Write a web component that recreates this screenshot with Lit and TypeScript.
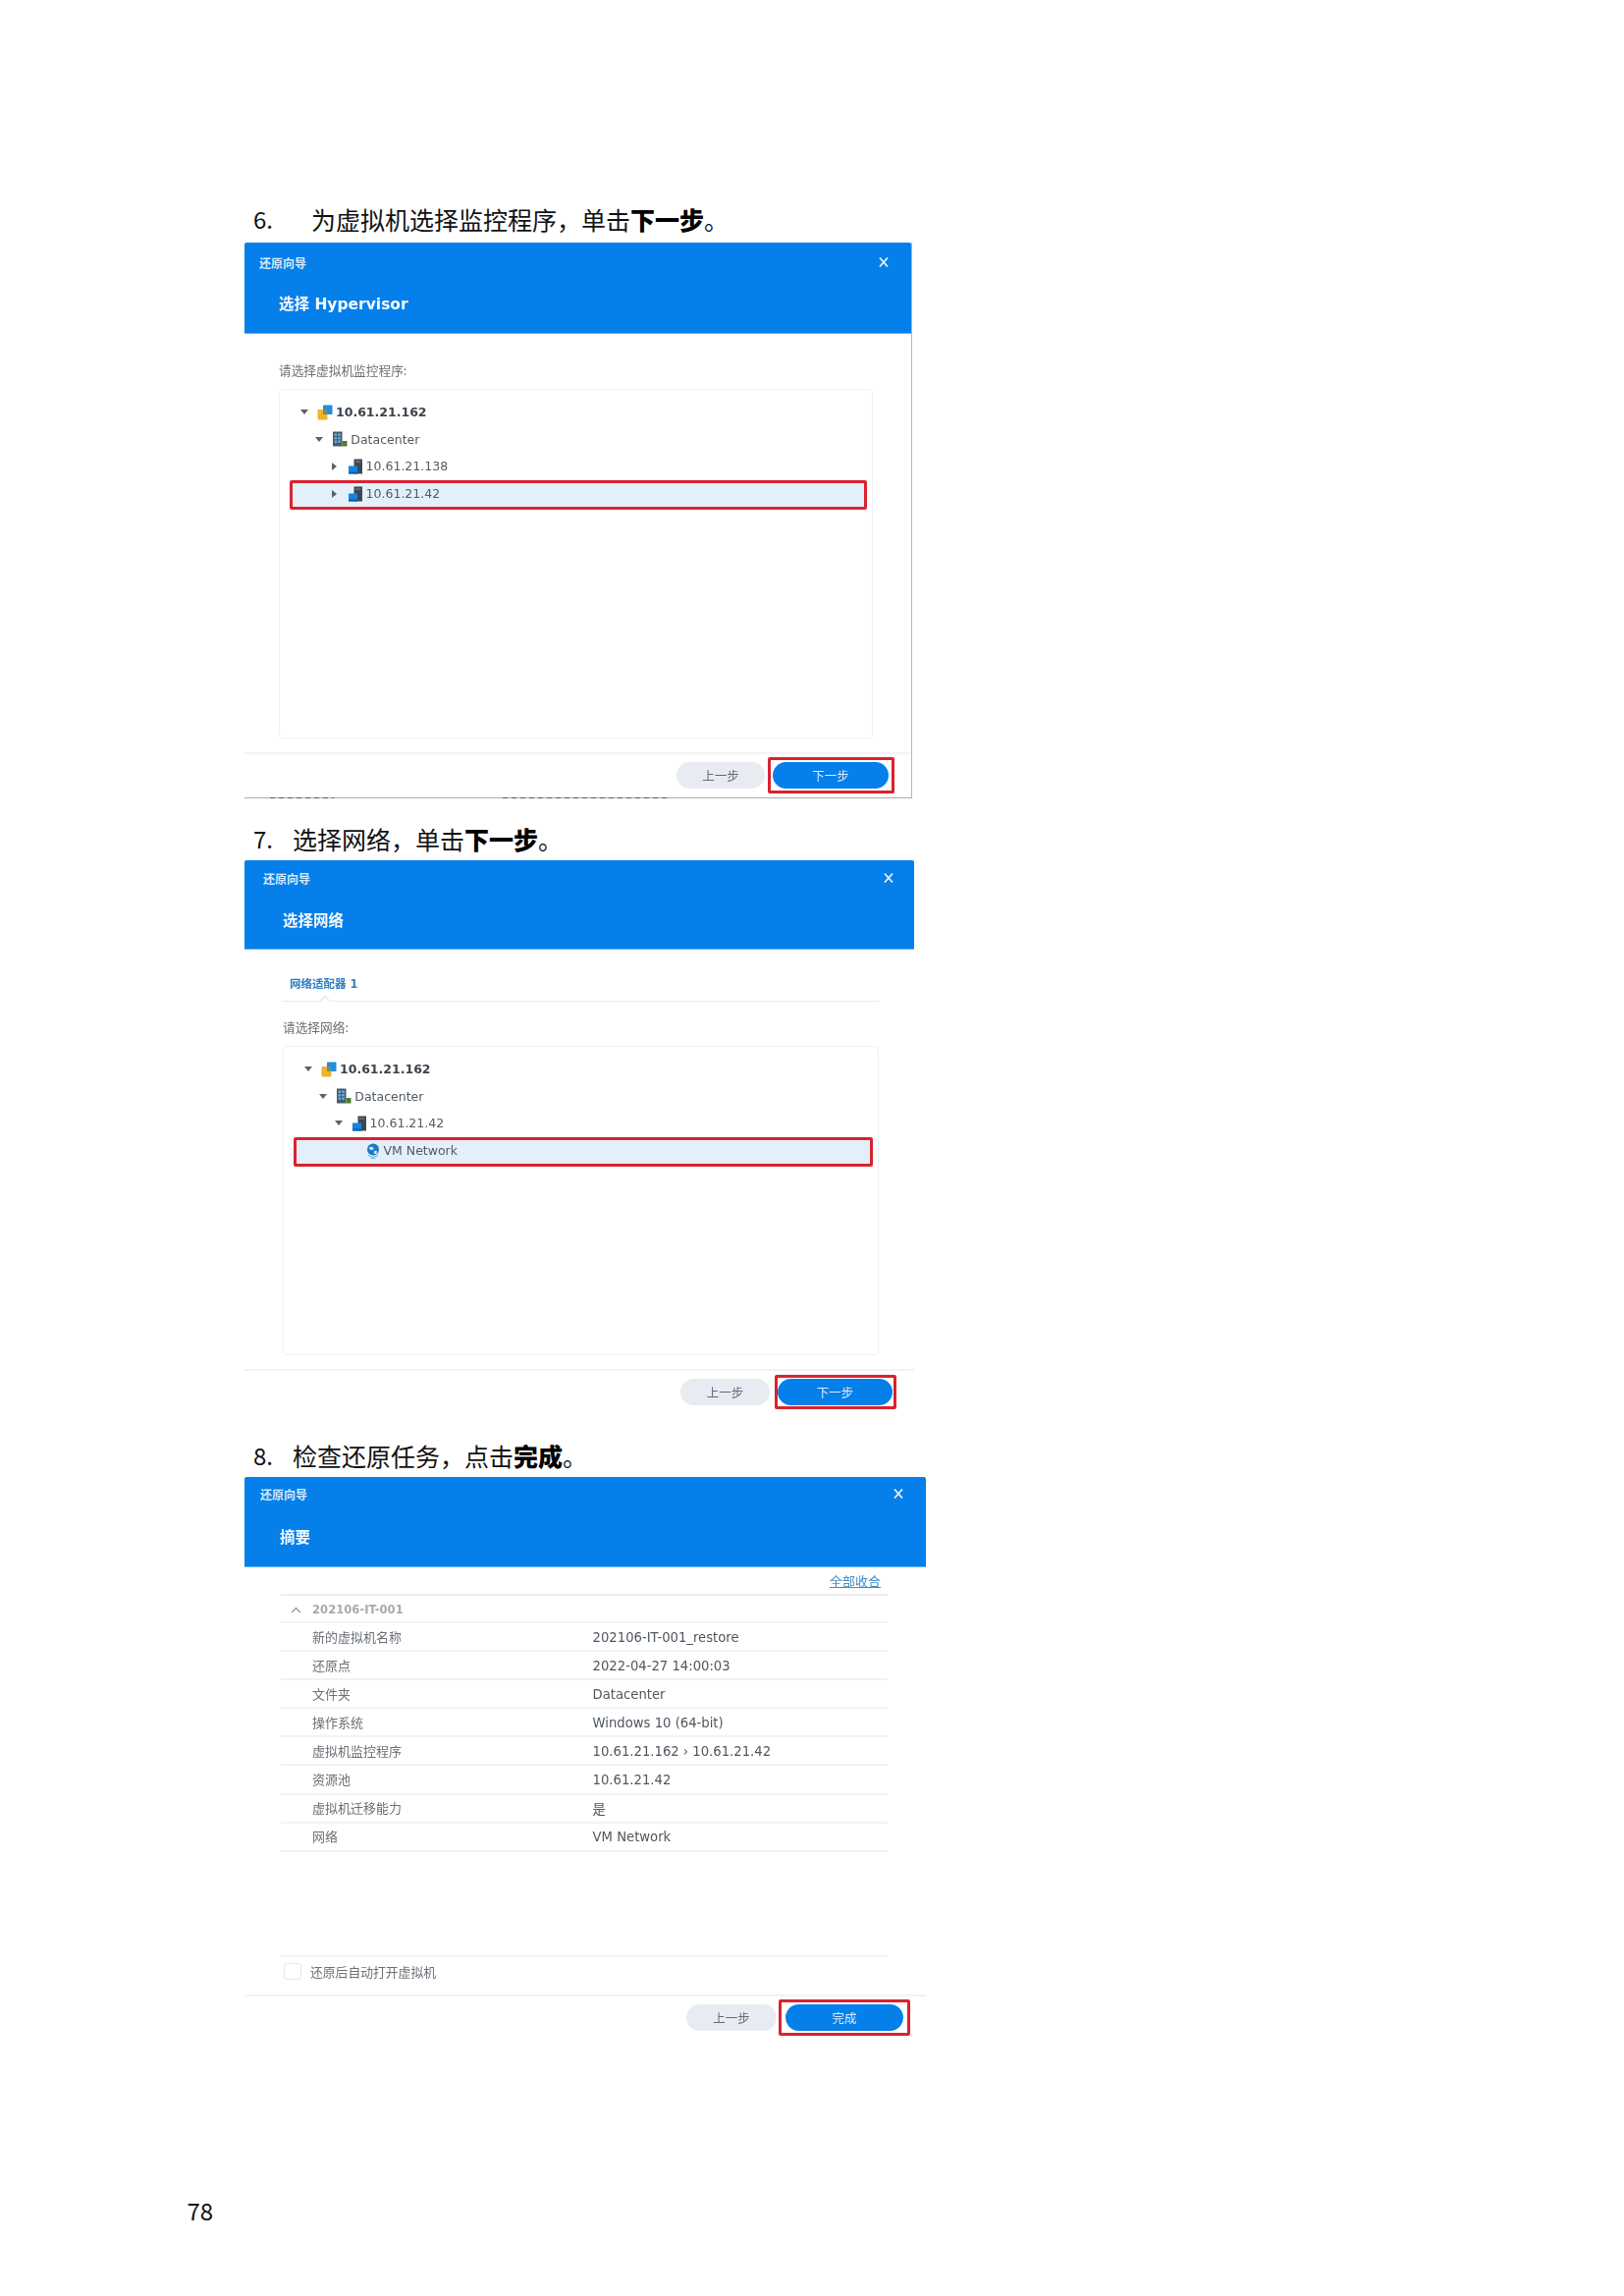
import { LitElement, html, css, svg } from "lit";
import { customElement } from "lit/decorators.js";

const icons = {
  vc: svg`<svg viewBox="0 0 16 16" width="16" height="16"><rect x="0.5" y="5" width="10" height="10.5" rx="1" fill="#f1b32b"/><rect x="6" y="0.5" width="9.5" height="9.5" rx="0.6" fill="#1f8edb"/><rect x="6" y="5" width="4.5" height="5" fill="#6d8f7f"/></svg>`,
  dc: svg`<svg viewBox="0 0 16 16" width="16" height="16"><rect x="1" y="0.5" width="9.5" height="15" fill="#4a5a6a"/><rect x="2.5" y="2.5" width="2.6" height="2.4" fill="#5fb0ea"/><rect x="6.2" y="2.5" width="2.6" height="2.4" fill="#5fb0ea"/><rect x="2.5" y="6" width="2.6" height="2.4" fill="#5fb0ea"/><rect x="6.2" y="6" width="2.6" height="2.4" fill="#5fb0ea"/><rect x="2.5" y="9.5" width="2.6" height="2.4" fill="#5fb0ea"/><rect x="6.2" y="9.5" width="2.6" height="2.4" fill="#5fb0ea"/><rect x="10.5" y="10" width="5" height="5.5" fill="#4f7a32"/></svg>`,
  host: svg`<svg viewBox="0 0 16 16" width="16" height="16"><rect x="6.5" y="0.5" width="8.5" height="15" fill="#3d4753"/><rect x="8" y="2.5" width="5.5" height="1.2" fill="#76818c"/><rect x="1" y="7.5" width="9" height="8" fill="#1583e0"/><rect x="1" y="13.5" width="9" height="2" fill="#0d5fa8"/></svg>`,
  net: svg`<svg viewBox="0 0 16 16" width="16" height="16"><circle cx="8" cy="6.5" r="6" fill="#1a78c4"/><path d="M4 4.5c2-1.5 3.5-.5 4.5.5s-1 2.5-2.5 2S3.5 5.5 4 4.5zM9.5 8c1.5-.5 2.8 0 2.5 1.5S9.5 11.5 9 10.5 8.5 8.5 9.5 8z" fill="#cfe6f7"/><path d="M3 12.5c2.8 1.8 7.2 1.8 10 0M8 13.5v2M5.5 15.5h5" stroke="#6fb0dd" stroke-width="1.2" fill="none"/></svg>`,
};

interface Node { label: string; icon: keyof typeof icons; level: number; arrow: "down" | "right" | "none"; strong?: boolean; sel?: boolean; }

const tree1: Node[] = [
  { label: "10.61.21.162", icon: "vc", level: 0, arrow: "down", strong: true },
  { label: "Datacenter", icon: "dc", level: 1, arrow: "down" },
  { label: "10.61.21.138", icon: "host", level: 2, arrow: "right" },
  { label: "10.61.21.42", icon: "host", level: 2, arrow: "right", sel: true },
];
const tree2: Node[] = [
  { label: "10.61.21.162", icon: "vc", level: 0, arrow: "down", strong: true },
  { label: "Datacenter", icon: "dc", level: 1, arrow: "down" },
  { label: "10.61.21.42", icon: "host", level: 2, arrow: "down" },
  { label: "VM Network", icon: "net", level: 3, arrow: "none", sel: true },
];
const summary: [string, string][] = [
  ["新的虚拟机名称", "202106-IT-001_restore"],
  ["还原点", "2022-04-27 14:00:03"],
  ["文件夹", "Datacenter"],
  ["操作系统", "Windows 10 (64-bit)"],
  ["虚拟机监控程序", "10.61.21.162 › 10.61.21.42"],
  ["资源池", "10.61.21.42"],
  ["虚拟机迁移能力", "是"],
  ["网络", "VM Network"],
];

@customElement("app-root")
export class AppRoot extends LitElement {
  static styles = css`
    :host { display: block; width: 1654px; height: 2338px; background: #fff; overflow: hidden;
      font-family: "DejaVu Sans", "Noto Sans CJK SC", sans-serif; color: #4d565f; }
    .page { padding: 206px 0 0 249px; box-sizing: border-box; height: 2338px; display: flex; flex-direction: column; align-items: flex-start; }
    .step { display: flex; padding-left: 9px; font: 400 25px/34px "Noto Sans CJK SC", sans-serif; color: #111; height: 41px; box-sizing: border-box; white-space: nowrap; }
    .step .num { width: 40px; flex: none; font-size: 24px; }
    .step.first .num { width: 59px; }
    .step b { font-weight: 900; color: #000; }
    .s2 { margin-top: 24px; height: 39px; }
    .s3 { margin-top: 26px; height: 39px; }

    .dialog { display: flex; flex-direction: column; box-sizing: border-box; position: relative; filter: blur(0.35px); }
    .d1 { width: 680px; height: 566px; border-right: 1px solid #b5b8bb; border-bottom: 1px solid #a9acaf;
      --bar: 40px; --title: 42px; --head: 93px; --barx: 15px; --titlex: 35px; --closex: 22px; --foot: 46px; --footr: 23px; --prev: 90px; --next: 118px; --gap: 8px; --rx: 5.5px; --ry: 5px; --pt: 8px; }
    .d2 { width: 682px; height: 563px;
      --bar: 36px; --title: 48px; --head: 91px; --barx: 19px; --titlex: 39px; --closex: 20px; --foot: 45px; --footr: 22px; --prev: 91px; --next: 117px; --gap: 8px; --rx: 3.5px; --ry: 4px; --pt: 8px; }
    .d3 { width: 694px; height: 573px;
      --bar: 34px; --title: 51px; --head: 92px; --barx: 16px; --titlex: 36px; --closex: 22px; --foot: 46px; --footr: 23px; --prev: 92px; --next: 120px; --gap: 9px; --rx: 7px; --ry: 5px; --pt: 8px; }

    .head { background: #057fea; height: var(--head); flex: none; box-sizing: border-box; border-bottom: 1.5px solid #62b6f0; color: #fff; border-radius: 2px 2px 0 0; }
    .bar { height: var(--bar); display: flex; align-items: center; justify-content: space-between; padding: 0 var(--closex) 0 var(--barx); font: 700 12px "Noto Sans CJK SC", sans-serif; color: #d5e9fb; }
    .bar svg { display: block; }
    .htitle { height: var(--title); display: flex; align-items: center; padding-left: var(--titlex); font: 700 15.5px "DejaVu Sans", "Noto Sans CJK SC", sans-serif; color: #f4f9fe; }

    .body { flex: 1; display: flex; flex-direction: column; min-height: 0; }
    .label { font: 400 12.7px/16px "Noto Sans CJK SC", sans-serif; color: #6a7076; }
    .tree { border: 1.5px solid #eef0f2; border-radius: 4px; box-sizing: border-box; padding-top: 9px; }
    .b1 { padding: 29px 0 0 35px; }
    .b1 .label { margin-bottom: 11px; }
    .b1 .tree { width: 605px; height: 356px; }
    .b2 { padding: 23px 0 0 38px; }
    .tab { font: 700 11.5px/24px "DejaVu Sans", "Noto Sans CJK SC", sans-serif; color: #2f80c6; padding-left: 8px; height: 30px; width: 608px; box-sizing: border-box; border-bottom: 1.5px solid #e9ecef; position: relative; }
    .tab::after { content: ""; position: absolute; left: 40px; bottom: -1.5px; width: 7px; height: 7px; background: #fff; border-left: 1.5px solid #e0e3e6; border-top: 1.5px solid #e0e3e6; transform: translateY(2.5px) rotate(45deg); }
    .b2 .label { margin: 18px 0 11px 1px; }
    .b2 .tree { width: 607px; height: 315px; margin-left: 1px; }

    .row { height: 27.6px; display: flex; align-items: center; position: relative; margin: 0 5px 0 10px; font-size: 12.5px; color: #515a63; white-space: nowrap; }
    .row > * { position: relative; z-index: 1; }
    .row.sel::after { content: ""; position: absolute; left: 0; right: 0; top: 0; bottom: -3px; box-sizing: border-box; background: #e3effb; border: 3.5px solid #d9232f; border-radius: 2px; z-index: 0; }
    .l0 { padding-left: 10px; }
    .l1 { padding-left: 25.3px; }
    .l2 { padding-left: 40.6px; }
    .l3 { padding-left: 72.5px; }
    .arr { width: 10px; height: 10px; flex: none; margin-right: 8px; display: flex; align-items: center; justify-content: center; }
    .arr.down::before { content: ""; border-left: 4px solid transparent; border-right: 4px solid transparent; border-top: 5px solid #59616a; }
    .arr.right::before { content: ""; border-top: 4px solid transparent; border-bottom: 4px solid transparent; border-left: 5px solid #59616a; }
    .ico { width: 16px; height: 16px; flex: none; margin-right: 3px; }
    .ico svg { display: block; }
    .strong { font-weight: 700; color: #3b444c; }

    .foot { height: var(--foot); flex: none; box-sizing: border-box; border-top: 2px solid #f1f2f4; display: flex; justify-content: flex-end; align-items: flex-start; gap: var(--gap); padding: var(--pt) var(--footr) 0 0; }
    .btn { height: 27px; border-radius: 14px; display: flex; align-items: center; justify-content: center; font: 400 12.5px "Noto Sans CJK SC", sans-serif; box-sizing: border-box; position: relative; }
    .prev { width: var(--prev); background: #e8ecf2; color: #626a72; }
    .next { width: var(--next); background: #057fea; color: #dcecfb; }
    .next::after { content: ""; position: absolute; left: calc(0px - var(--rx)); right: calc(0px - var(--rx)); top: calc(0px - var(--ry)); bottom: calc(0px - var(--ry)); border: 3px solid #d9232f; border-radius: 2px; }
    .scrap { position: absolute; bottom: -1px; height: 1.5px; background: repeating-linear-gradient(90deg, #4d5a55 0 5px, transparent 5px 9px); }
    .scrap.a { left: 26px; width: 65px; }
    .scrap.b { left: 263px; width: 171px; }

    .b3 { padding: 0 39px 0 37px; }
    .linkrow { height: 27px; flex: none; box-sizing: border-box; display: flex; justify-content: flex-end; align-items: center; padding-right: 7px; font: 400 13px "Noto Sans CJK SC", sans-serif; color: #3f8fc8; text-decoration: underline; }
    .group { height: 30px; flex: none; box-sizing: border-box; border-top: 2px solid #eceef0; border-bottom: 2px solid #f1f2f4; padding-top: 2px; display: flex; align-items: center; font-weight: 700; font-size: 11.6px; color: #a6abb0; }
    .caret { width: 32px; flex: none; display: flex; justify-content: center; padding-right: 2px; box-sizing: border-box; }
    .caret svg { display: block; }
    .tr { height: 29.1px; flex: none; box-sizing: border-box; border-bottom: 2px solid #f1f2f4; display: flex; align-items: center; font-size: 13.2px; color: #4e575f; padding: 1px 0 0 32px; white-space: nowrap; }
    .tr .k { width: 285.6px; flex: none; margin-top: -2px; font: 400 13px "Noto Sans CJK SC", sans-serif; color: #6a7076; }
    .spacer { flex: 1; }
    .check { height: 40px; flex: none; box-sizing: border-box; border-top: 2px solid #f1f2f4; display: flex; align-items: center; gap: 9px; padding: 0 0 10px 3px; font: 400 12.8px "Noto Sans CJK SC", sans-serif; color: #6a7076; }
    .box { width: 18px; height: 17px; box-sizing: border-box; border: 1.5px solid #e3e6e9; border-radius: 3px; background: #fff; }

    .pageno { margin: auto 0 70px -58.5px; font: 400 24px/34px "Noto Sans CJK SC", sans-serif; color: #111; }
  `;

  private row(n: Node) {
    return html`<div class="row l${n.level} ${n.sel ? "sel" : ""}">
      ${n.arrow === "none" ? "" : html`<span class="arr ${n.arrow}"></span>`}
      <span class="ico">${icons[n.icon]}</span>
      <span class="${n.strong ? "strong" : ""}">${n.label}</span>
    </div>`;
  }

  private head(title: string) {
    return html`<div class="head">
      <div class="bar"><span>还原向导</span>
        <svg width="12" height="12" viewBox="0 0 12 12"><path d="M2 1.5l8 9M10 1.5l-8 9" stroke="#e6f2fd" stroke-width="1.8" fill="none"/></svg>
      </div>
      <div class="htitle">${title}</div>
    </div>`;
  }

  private foot(next: string) {
    return html`<div class="foot"><div class="btn prev">上一步</div><div class="btn next">${next}</div></div>`;
  }

  render() {
    return html`<div class="page">
      <div class="step first"><span class="num">6.</span><span>为虚拟机选择监控程序，单击<b>下一步</b>。</span></div>
      <section class="dialog d1">
        ${this.head("选择 Hypervisor")}
        <div class="body b1">
          <div class="label">请选择虚拟机监控程序:</div>
          <div class="tree">${tree1.map((n) => this.row(n))}</div>
        </div>
        ${this.foot("下一步")}
        <div class="scrap a"></div><div class="scrap b"></div>
      </section>

      <div class="step s2"><span class="num">7.</span><span>选择网络，单击<b>下一步</b>。</span></div>
      <section class="dialog d2">
        ${this.head("选择网络")}
        <div class="body b2">
          <div class="tab">网络适配器 1</div>
          <div class="label">请选择网络:</div>
          <div class="tree">${tree2.map((n) => this.row(n))}</div>
        </div>
        ${this.foot("下一步")}
      </section>

      <div class="step s3"><span class="num">8.</span><span>检查还原任务，点击<b>完成</b>。</span></div>
      <section class="dialog d3">
        ${this.head("摘要")}
        <div class="body b3">
          <div class="linkrow">全部收合</div>
          <div class="group"><span class="caret"><svg width="11" height="7" viewBox="0 0 11 7"><path d="M1 6l4.5-4.5L10 6" stroke="#9aa0a6" stroke-width="1.5" fill="none"/></svg></span>202106-IT-001</div>
          ${summary.map(([k, v]) => html`<div class="tr"><span class="k">${k}</span><span>${v}</span></div>`)}
          <div class="spacer"></div>
          <div class="check"><span class="box"></span><span>还原后自动打开虚拟机</span></div>
        </div>
        ${this.foot("完成")}
      </section>

      <div class="pageno">78</div>
    </div>`;
  }
}
